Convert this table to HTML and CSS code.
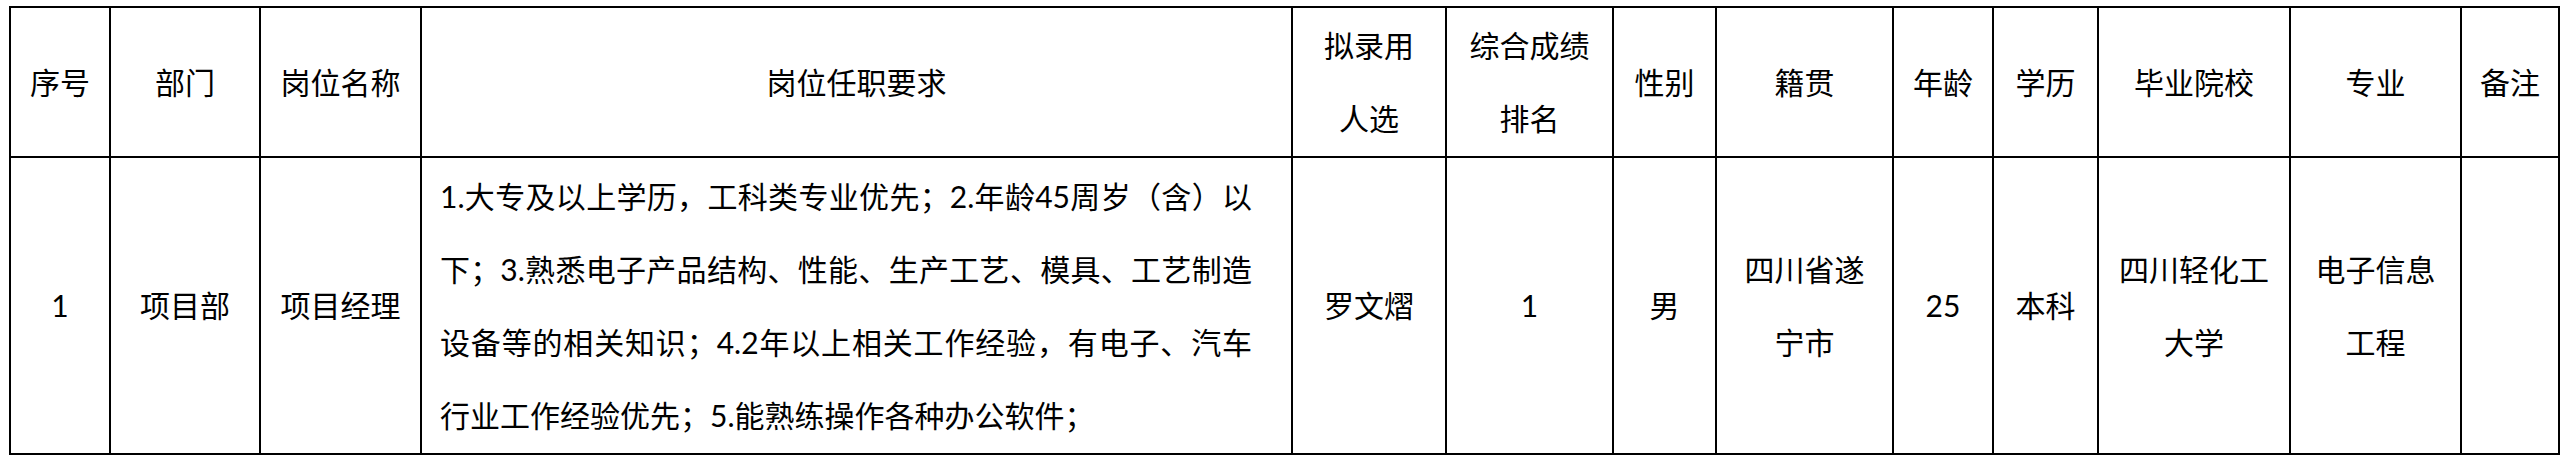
FILE: index.html
```html
<!DOCTYPE html>
<html lang="zh-CN">
<head>
<meta charset="utf-8">
<title>拟录用人选</title>
<link rel="stylesheet" href="styles.css">
</head>
<body>
<table class="roster">
  <colgroup>
    <col class="c-no">
    <col class="c-dept">
    <col class="c-post">
    <col class="c-req">
    <col class="c-name">
    <col class="c-rank">
    <col class="c-sex">
    <col class="c-origin">
    <col class="c-age">
    <col class="c-edu">
    <col class="c-school">
    <col class="c-major">
    <col class="c-note">
  </colgroup>
  <thead>
    <tr class="head-row">
      <th>序号</th>
      <th>部门</th>
      <th>岗位名称</th>
      <th>岗位任职要求</th>
      <th>拟录用<br>人选</th>
      <th>综合成绩<br>排名</th>
      <th>性别</th>
      <th>籍贯</th>
      <th>年龄</th>
      <th>学历</th>
      <th>毕业院校</th>
      <th>专业</th>
      <th>备注</th>
    </tr>
  </thead>
  <tbody>
    <tr class="body-row">
      <td>1</td>
      <td>项目部</td>
      <td>项目经理</td>
      <td class="req"><p class="req-text">1.大专及以上学历，工科类专业优先；2.年龄45周岁（含）以下；3.熟悉电子产品结构、性能、生产工艺、模具、工艺制造设备等的相关知识；4.2年以上相关工作经验，有电子、汽车行业工作经验优先；5.能熟练操作各种办公软件；</p></td>
      <td>罗文熠</td>
      <td>1</td>
      <td>男</td>
      <td>四川省遂<br>宁市</td>
      <td>25</td>
      <td>本科</td>
      <td>四川轻化工<br>大学</td>
      <td>电子信息<br>工程</td>
      <td></td>
    </tr>
  </tbody>
</table>
</body>
</html>
```

FILE: styles.css
```css
html, body {
  margin: 0;
  padding: 0;
  background: #ffffff;
}

body {
  font-family: "Lato", "Noto Sans CJK SC", sans-serif;
  color: #000000;
}

.roster {
  margin: 6px 0 0 9px;
  border-collapse: collapse;
  table-layout: fixed;
  width: 2551px;
  font-size: 30px;
  line-height: 73px;
}

.roster th,
.roster td {
  border: 2px solid #000000;
  padding: 0 4px;
  text-align: center;
  vertical-align: middle;
  font-weight: 400;
  white-space: nowrap;
}

.head-row { height: 150px; }
.body-row { height: 297px; }

.c-no { width: 100px; }
.c-dept { width: 150px; }
.c-post { width: 161px; }
.c-req { width: 871px; }
.c-name { width: 154px; }
.c-rank { width: 167px; }
.c-sex { width: 103px; }
.c-origin { width: 177px; }
.c-age { width: 100px; }
.c-edu { width: 105px; }
.c-school { width: 192px; }
.c-major { width: 171px; }
.c-note { width: 98px; }

.roster td.req {
  white-space: normal;
  text-align: left;
  padding: 0 0 0 18px;
}

.req-text {
  margin: 0;
  width: 812px;
  text-align: justify;
}
```
